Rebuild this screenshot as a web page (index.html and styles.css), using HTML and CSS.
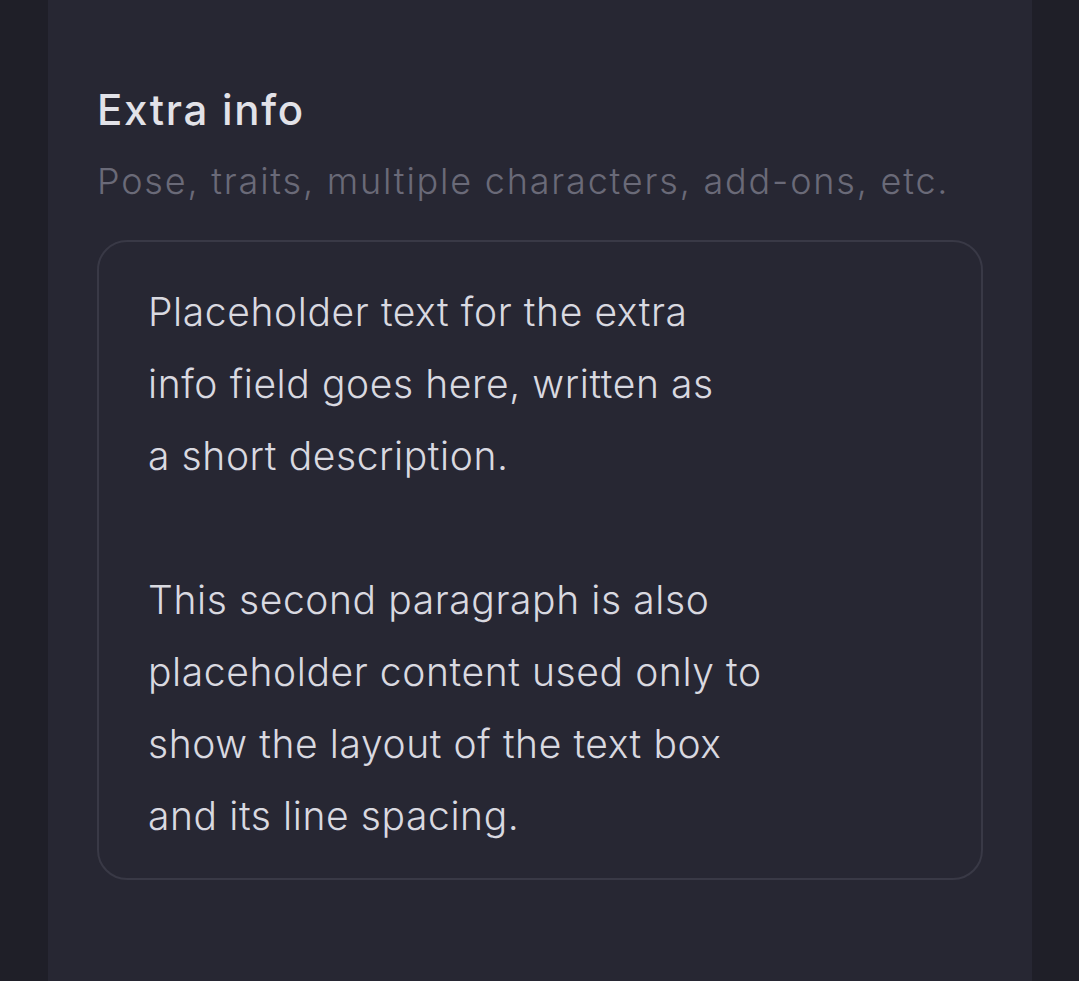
FILE: index.html
```html
<!DOCTYPE html>
<html lang="en">
<head>
<meta charset="utf-8">
<title>Extra info</title>
<link rel="stylesheet" href="styles.css">
</head>
<body>
  <main class="panel">
    <section class="field">
      <h2 class="field-title">Extra info</h2>
      <p class="field-hint">Pose, traits, multiple characters, add-ons, etc.</p>
      <div class="field-box">
        <p>Placeholder text for the extra<br>info field goes here, written as<br>a short description.</p>
        <p>This second paragraph is also<br>placeholder content used only to<br>show the layout of the text box<br>and its line spacing.</p>
      </div>
    </section>
  </main>
</body>
</html>
```

FILE: styles.css
```css
html, body {
  margin: 0;
  padding: 0;
  height: 100%;
}
body {
  background: #1f1f28;
  font-family: "Inter", "Liberation Sans", sans-serif;
  display: flex;
  justify-content: center;
}
.panel {
  width: 984px;
  margin-left: 48px;
  margin-right: 47px;
  background: #272733;
  min-height: 981px;
  box-sizing: border-box;
  padding: 82px 49px 0 49px;
}
.field-title {
  margin: 0;
  font-size: 42px;
  font-weight: 500;
  color: #e2e2e8;
  line-height: 56px;
  letter-spacing: 1.7px;
}
.field-hint {
  margin: 20px 0 0 0;
  font-size: 36px;
  font-weight: 300;
  color: #6a6a78;
  line-height: 46px;
  letter-spacing: 1.8px;
}
.field-box {
  margin-top: 36px;
  border: 2px solid #393946;
  border-radius: 30px;
  padding: 34px 49px 26px 49px;
  width: 886px;
  box-sizing: border-box;
  height: 640px;
}
.field-box p {
  margin: 0;
  font-size: 39px;
  font-weight: 300;
  line-height: 72px;
  color: #d9d9e0;
  letter-spacing: 0.6px;
}
.field-box p + p {
  margin-top: 72px;
}
```
